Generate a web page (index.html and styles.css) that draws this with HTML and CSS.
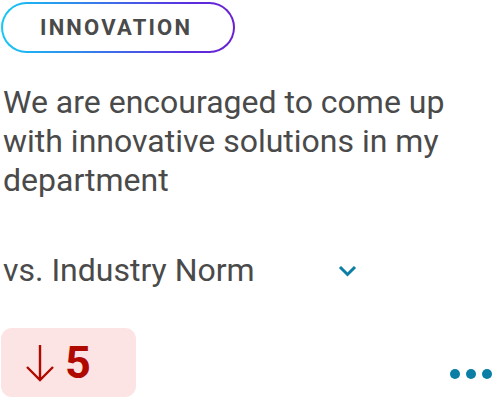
FILE: index.html
```html
<!DOCTYPE html>
<html lang="en">
<head>
<meta charset="utf-8">
<link rel="stylesheet" href="styles.css">
</head>
<body>
<div class="card">
  <div class="badge"><span>INNOVATION</span></div>
  <p class="question">We are encouraged to come up with innovative solutions in my department</p>
  <div class="compare">
    <span class="compare-label">vs. Industry Norm</span>
    <svg class="chevron" width="19" height="12" viewBox="0 0 19 12"><path d="M2 2 L9.5 9.5 L17 2" fill="none" stroke="#0a7ea4" stroke-width="3"/></svg>
  </div>
  <div class="footer">
    <div class="score">
      <svg class="arrow" width="32" height="38" viewBox="0 0 32 38"><path d="M16 1 V36 M3 23 L16 36 L29 23" fill="none" stroke="#b00a00" stroke-width="2.4"/></svg>
      <span class="value">5</span>
    </div>
    <div class="dots"><i></i><i></i><i></i></div>
  </div>
</div>
</body>
</html>
```
FILE: styles.css
```css
html, body { margin: 0; padding: 0; background: #fff; }
body { font-family: Roboto, "Noto Sans", sans-serif; color: #4a4a4a; width: 494px; height: 400px; overflow: hidden; }
.card { display: flex; flex-direction: column; padding: 2px 1px 0 1px; }
.badge {
  align-self: flex-start;
  width: 234px; height: 51px; box-sizing: border-box;
  border: 2px solid transparent; border-radius: 26px;
  background: linear-gradient(#fff, #fff) padding-box, linear-gradient(90deg, #14c8f4, #5a2ee0 80%, #6a1fd0) border-box;
  display: flex; align-items: center; padding-left: 37px;
}
.badge span { font-weight: 700; font-size: 22px; letter-spacing: 2.2px; color: #4a4a4a; }
.question { margin: 30px 0 0 2px; font-size: 32px; line-height: 39px; color: #4a4a4a; }
.compare { display: flex; align-items: center; margin: 50px 0 0 2px; height: 40px; }
.compare-label { font-size: 32px; width: 335px; }
.chevron { margin-top: 2px; }
.footer { display: flex; justify-content: space-between; align-items: flex-end; margin-top: 38px; }
.score {
  width: 135px; height: 69px; box-sizing: border-box; background: #fce4e4; border-radius: 11px;
  display: flex; align-items: center; padding-left: 23px; gap: 9px; color: #b00a00;
}
.arrow { margin-top: 1px; }
.value { font-size: 45px; font-weight: 700; line-height: 1; }
.dots { display: flex; gap: 6px; margin-right: 1px; margin-bottom: 18px; }
.dots i { width: 10px; height: 10px; border-radius: 50%; background: #0a7ea4; display: block; }
```
